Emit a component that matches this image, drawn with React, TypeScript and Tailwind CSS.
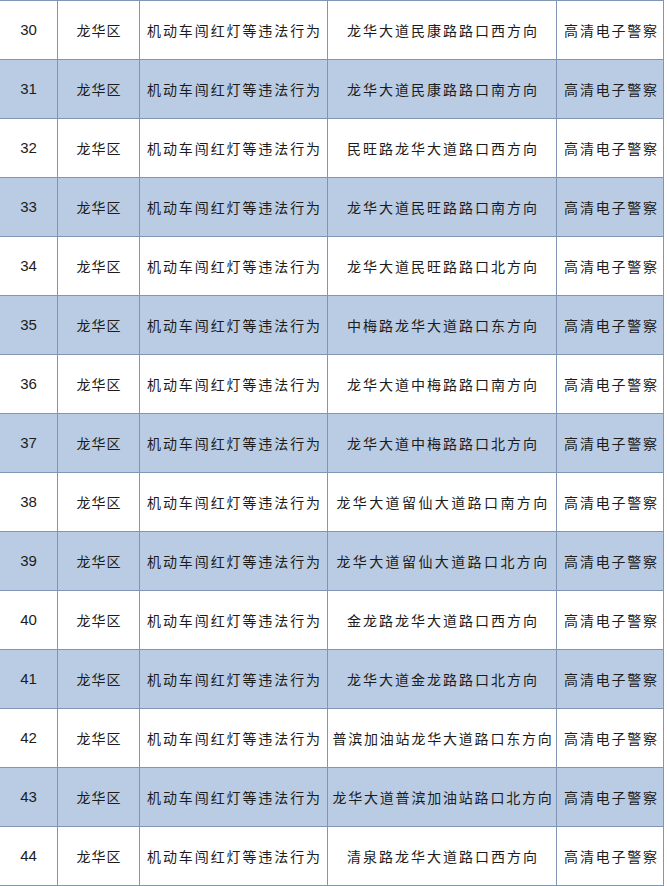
const ROWS = [
  { no: 30, road: '龙华大道民康路路口西方向' },
  { no: 31, road: '龙华大道民康路路口南方向' },
  { no: 32, road: '民旺路龙华大道路口西方向' },
  { no: 33, road: '龙华大道民旺路路口南方向' },
  { no: 34, road: '龙华大道民旺路路口北方向' },
  { no: 35, road: '中梅路龙华大道路口东方向' },
  { no: 36, road: '龙华大道中梅路路口南方向' },
  { no: 37, road: '龙华大道中梅路路口北方向' },
  { no: 38, road: '龙华大道留仙大道路口南方向' },
  { no: 39, road: '龙华大道留仙大道路口北方向' },
  { no: 40, road: '金龙路龙华大道路口西方向' },
  { no: 41, road: '龙华大道金龙路路口北方向' },
  { no: 42, road: '普滨加油站龙华大道路口东方向' },
  { no: 43, road: '龙华大道普滨加油站路口北方向' },
  { no: 44, road: '清泉路龙华大道路口西方向' },
]

const cjk = "font-['Noto_Sans_CJK_SC',sans-serif]"

export default function App() {
  return (
    <main className="w-[667px] h-[886px] bg-white overflow-hidden">
      <div className="w-[664px] border-t border-r border-[#8096b4] text-[#1c1c1c]">
        {ROWS.map((r) => (
          <div
            key={r.no}
            className={`grid grid-cols-[58px_82px_188px_229px_107px] h-[59px] border-b border-[#8096b4] ${
              r.no % 2 === 1 ? 'bg-[#b9cce4]' : 'bg-white'
            }`}
          >
            <div className="flex items-center justify-center border-r border-[#8096b4] font-['Liberation_Sans',sans-serif] text-[15px]">
              {r.no}
            </div>
            <div className={`flex items-center justify-center border-r border-[#8096b4] ${cjk} text-[14px] tracking-[1px] pl-[1px] whitespace-nowrap`}>
              龙华区
            </div>
            <div className={`flex items-center justify-center border-r border-[#8096b4] ${cjk} text-[14px] tracking-[1.9px] pl-[2px] whitespace-nowrap`}>
              机动车闯红灯等违法行为
            </div>
            <div
              className={`flex items-center justify-center border-r border-[#8096b4] ${cjk} text-[14px] whitespace-nowrap ${
                r.road.length >= 14 ? 'tracking-[1.8px] pl-[2px]' : r.road.length === 13 ? 'tracking-[2.4px] pl-[2px]' : 'tracking-[2px] pl-[2px]'
              }`}
            >
              {r.road}
            </div>
            <div className={`flex items-center justify-center ${cjk} text-[14px] tracking-[1.8px] pl-[2px] whitespace-nowrap`}>
              高清电子警察
            </div>
          </div>
        ))}
      </div>
    </main>
  )
}
